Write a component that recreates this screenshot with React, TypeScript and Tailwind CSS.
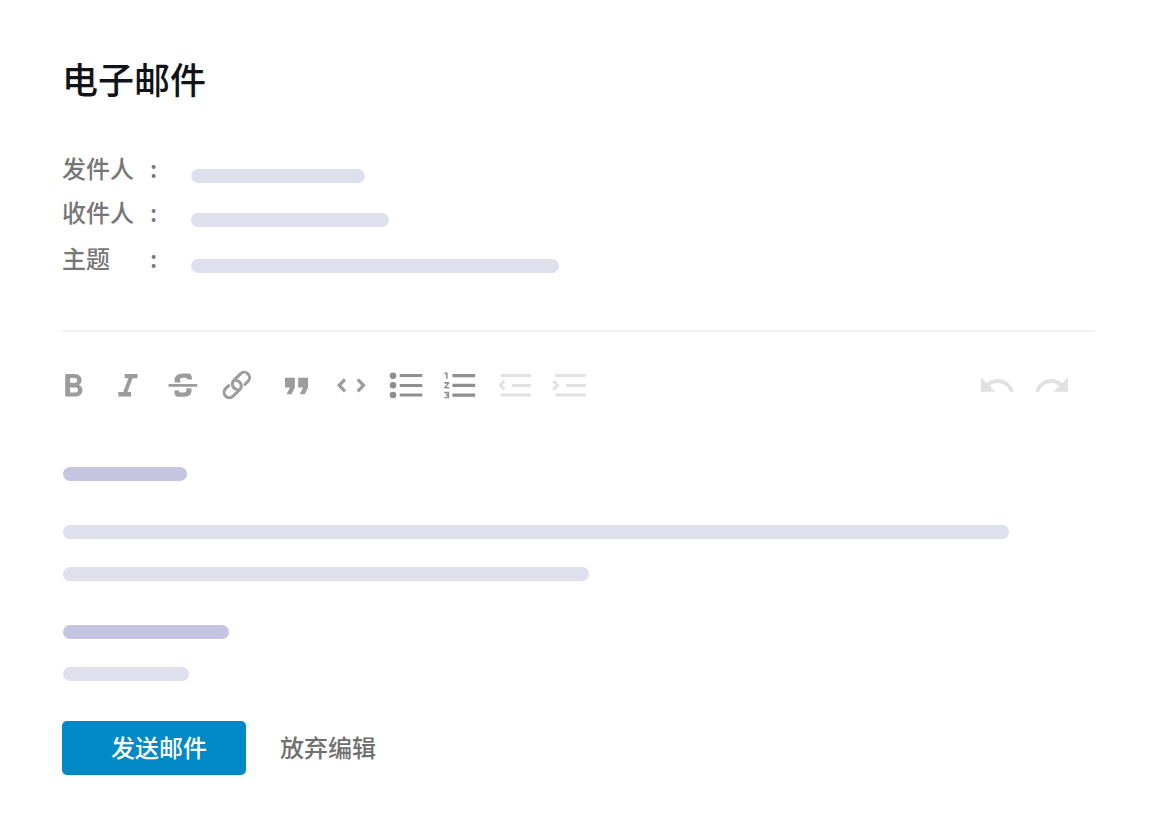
import React from 'react';
import clsx from 'clsx';

type IconProps = { children: React.ReactNode };

function Icon({ children }: IconProps) {
  return (
    <svg viewBox="0 0 48 36" className="h-9 w-12" fill="currentColor" aria-hidden="true">
      {children}
    </svg>
  );
}

function ToolButton({ label, disabled, strong, children }: { label: string; disabled?: boolean; strong?: boolean; children: React.ReactNode }) {
  return (
    <button
      type="button"
      aria-label={label}
      disabled={disabled}
      className={clsx('h-9 w-12', disabled ? 'text-[#e1e1e1]' : strong ? 'text-[#8f8f8f]' : 'text-[#9c9c9c]')}
    >
      <Icon>{children}</Icon>
    </button>
  );
}

function Bar({ className }: { className: string }) {
  return <div className={clsx('h-3.5 max-w-full rounded-full', className)} />;
}

function Field({ label, className, barClass }: { label: string; className: string; barClass: string }) {
  return (
    <div className={clsx('flex items-center', className)}>
      <dt className="flex w-[129px] shrink-0 text-2xl font-medium text-[#777777]">
        <span className="w-[88px]">{label}</span>
        <span>:</span>
      </dt>
      <dd className="min-w-0 flex-1 pt-4">
        <Bar className={clsx('bg-[#dfe0ee]', barClass)} />
      </dd>
    </div>
  );
}

function Toolbar() {
  return (
    <div className="mt-[35px] -ml-2 mr-5 flex items-center justify-between" role="toolbar" aria-label="格式">
      <div className="flex gap-1.5">
        <ToolButton label="粗体">
          <path transform="translate(0 .6) scale(1.6)" d="M15.6 10.79c.97-.67 1.65-1.77 1.65-2.79 0-2.26-1.75-4-4-4H7v14h7.04c2.09 0 3.71-1.7 3.71-3.79 0-1.52-.86-2.82-2.15-3.42zM10 6.5h3c.83 0 1.5.67 1.5 1.5s-.67 1.5-1.5 1.5h-3v-3zm3.5 9H10v-3h3.5c.83 0 1.5.67 1.5 1.5s-.67 1.5-1.5 1.5z" />
        </ToolButton>
        <ToolButton label="斜体">
          <path transform="translate(.7 .6) scale(1.6)" d="M10 4v2.7h2.3L9.1 15.3H6V18h8v-2.7h-2.3l3.2-8.6H18V4z" />
        </ToolButton>
        <ToolButton label="删除线">
          <path d="M6.5 17h28.7v2.8H6.5z" />
          <path d="M12.8 15.6C11.5 9.5 15 6.600 21.500 6.600H25.500c3.100 0 4.500 1.800 4.500 6h-4.900c0-1.300-.5-1.900-1.700-1.900h-2.200c-2.300 0-3.200.8-3.200 2.300 0 1 .4 1.900 1.300 2.600z" />
          <path d="M24.200 21.300H29.400C30.300 27 27.800 29.800 22 29.800H16.800C13.500 29.800 12.300 28 12.300 23.400H17c0 1.500.5 2.200 1.800 2.200h2.500c2.700 0 3.700-1.500 2.900-4.300z" />
        </ToolButton>
        <ToolButton label="链接">
          <g transform="translate(20.800 18) rotate(-45)" fill="none" stroke="currentColor" strokeWidth="3" strokeLinecap="round">
            <path d="M6 5.300H10.500A5.300 5.300 0 0 0 10.500-5.300H1.200A5.300 5.300 0 0 0-3 3.200" />
            <path d="M-6-5.300H-10.500A5.300 5.300 0 0 0-10.500 5.300H-1.200A5.300 5.300 0 0 0 3-3.200" />
          </g>
        </ToolButton>
        <ToolButton label="引用">
          <path transform="translate(6.700 -.9) scale(1.650)" d="M6 17h3l2-4V7H5v6h3zm8 0h3l2-4V7h-6v6h3z" />
        </ToolButton>
        <ToolButton label="代码">
          <path d="M21 12.300l-5.800 6 5.800 6M33.700 12.300l5.800 6-5.800 6" fill="none" stroke="currentColor" strokeWidth="3.200" />
        </ToolButton>
        <ToolButton label="项目符号列表" strong>
          <circle cx="15" cy="8.700" r="3.300" />
          <circle cx="15" cy="18.300" r="3.300" />
          <circle cx="15" cy="28" r="3.300" />
          <path d="M21.700 7h22.600v3H21.700zM21.700 17h22.600v3H21.700zM21.700 26.500h22.600v3H21.700z" />
        </ToolButton>
        <ToolButton label="编号列表" strong>
          <path transform="translate(9.100 -1.100) scale(1.620)" d="M2 17h2v.5H3v1h1v.5H2v1h3v-4H2v1zm1-9h1V4H2v1h1v3zm-1 3h1.800L2 13.100v.9h3v-1H3.200L5 10.900V10H2v1zm5-6v2h14V5H7zm0 14h14v-2H7v2zm0-6h14v-2H7v2z" />
        </ToolButton>
        <ToolButton label="减少缩进" disabled>
          <path d="M14.700 7H45v3H14.700zM26 17h19v3H26zM14.700 26.500H45v3H14.700z" />
          <path d="M18.500 14l-4.300 4.300 4.300 4.300" fill="none" stroke="currentColor" strokeWidth="2.800" />
        </ToolButton>
        <ToolButton label="增加缩进" disabled>
          <path d="M15.300 7h30.400v3H15.300zM26.300 17h19.400v3H26.300zM15.300 26.500h30.400v3H15.300z" />
          <path d="M13.300 14l4.300 4.300-4.300 4.300" fill="none" stroke="currentColor" strokeWidth="2.800" />
        </ToolButton>
      </div>
      <div className="flex gap-1.5">
        <ToolButton label="撤销" disabled>
          <path transform="translate(4.800 -.9) scale(1.600)" d="M12.500 8c-2.650 0-5.050.990-6.900 2.600L2 7v9h9l-3.620-3.620c1.390-1.160 3.160-1.880 5.120-1.880 3.540 0 6.550 2.310 7.600 5.500h2.370C21.080 11.030 17.150 8 12.500 8z" />
        </ToolButton>
        <ToolButton label="重做" disabled>
          <path transform="translate(5.800 -.9) scale(1.600)" d="M18.400 10.600C16.550 8.990 14.150 8 11.500 8c-4.650 0-8.580 3.030-9.960 8H3.900c1.050-3.190 4.050-5.500 7.600-5.500 1.950 0 3.730.720 5.120 1.880L13 16h9V7l-3.600 3.600z" />
        </ToolButton>
      </div>
    </div>
  );
}

export default function App() {
  return (
    <main className="min-h-screen bg-white pt-[52px] pr-[75px] pb-12 pl-[62px] font-['Noto_Sans_CJK_SC','Noto_Sans',sans-serif]">
      <h1 className="text-4xl leading-[52px] font-medium text-[#111417]">电子邮件</h1>

      <dl className="mt-[42px]">
        <Field label="发件人" className="h-11" barClass="w-[174px]" />
        <Field label="收件人" className="h-11" barClass="w-[198px]" />
        <Field label="主题" className="h-12" barClass="w-[368px]" />
      </dl>

      <hr className="mt-12 border-t-2 border-[#f2f2f2]" />

      <Toolbar />

      {/* Message body */}
      <div className="mt-16 pl-px">
        <Bar className="w-[124px] bg-[#c4c5e0]" />
        <Bar className="mt-11 w-[946px] bg-[#dfe0ee]" />
        <Bar className="mt-7 w-[526px] bg-[#dfe0ee]" />
        <Bar className="mt-11 w-[166px] bg-[#c4c5e0]" />
        <Bar className="mt-7 w-[126px] bg-[#dfe0ee]" />
      </div>

      <div className="mt-10 flex items-center gap-[34px]">
        <button type="button" className="h-[54px] w-[184px] rounded-[5px] bg-[#0089c7] pb-0.5 pl-2.5 text-2xl font-medium text-white">
          发送邮件
        </button>
        <button type="button" className="pb-0.5 text-2xl font-medium text-[#707070]">
          放弃编辑
        </button>
      </div>
    </main>
  );
}
